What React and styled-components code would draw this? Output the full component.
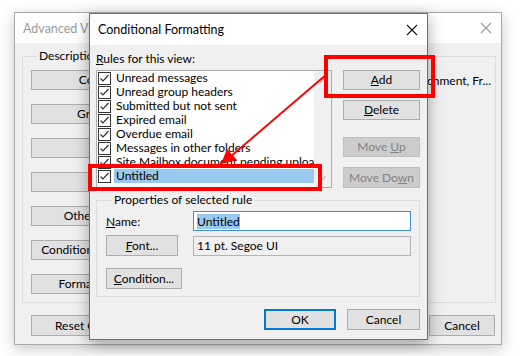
import React from 'react';
import styled, {createGlobalStyle} from 'styled-components';

const Global = createGlobalStyle`
  html, body { margin: 0; padding: 0; background: #fff; }
  body { font-family: Lato, "Noto Sans", sans-serif; font-size: 12px; color: #000; }
`;

const rules = [
  'Unread messages',
  'Unread group headers',
  'Submitted but not sent',
  'Expired email',
  'Overdue email',
  'Messages in other folders',
  'Site Mailbox document pending upload',
  'Untitled',
];

const bgButtons = [
  ['Columns...', 'Importance, Reminder, Icon, Attachment, Fr...'],
  ['Group By...', ''],
  ['Sort...', ''],
  ['Filter...', ''],
  ['Other Settings...', ''],
  ['Conditional Formatting...', ''],
  ['Format Columns...', ''],
];

function CloseIcon({color}) {
  return (
    <svg width="12" height="12" viewBox="0 0 12 12">
      <path d="M1 1 L11 11 M11 1 L1 11" stroke={color} strokeWidth="1.1" fill="none" />
    </svg>
  );
}

function Check() {
  return (
    <CheckBox width="13" height="13" viewBox="0 0 13 13">
      <rect x="0.5" y="0.5" width="12" height="12" fill="#fff" stroke="#333" />
      <path d="M2.5 6.5 L5 9 L10.5 3" stroke="#333" strokeWidth="1.2" fill="none" />
    </CheckBox>
  );
}

export default function App() {
  return (
    <Desktop>
      <Global />

      {/* background window */}
      <Window $x={14} $y={12} $w={488} $h={333}>
        <TitleBar $h={30}>
          <Title $inactive>Advanced View Settings: Compact</Title>
          <CloseIcon color="#9a9a9a" />
        </TitleBar>
        <BgBody>
          <Group $pad="1px 4px 8px 8px">
            <legend>Description</legend>
            <BgRows>
              {bgButtons.map(([label, desc]) => (
                <BgRow key={label}>
                  <Button $w={150} $h={20}>{label}</Button>
                  <BgDesc>{desc}</BgDesc>
                </BgRow>
              ))}
            </BgRows>
          </Group>
          <BgFooter>
            <Button $w={150} $h={21}>Reset Current View</Button>
            <Button $w={66} $h={21}>Cancel</Button>
          </BgFooter>
        </BgBody>
      </Window>

      {/* foreground window */}
      <Window $x={89} $y={13} $w={339} $h={327} $active>
        <TitleBar $h={31}>
          <Title>Conditional Formatting</Title>
          <CloseIcon color="#111" />
        </TitleBar>
        <Body>
          <Caption><u>R</u>ules for this view:</Caption>
          <TopRow>
            <ListBox>
              <Items>
                {rules.map((r, i) => (
                  <Item key={r}>
                    <Check />
                    <ItemText $selected={i === rules.length - 1}>{r}</ItemText>
                  </Item>
                ))}
              </Items>
              <ScrollTrack>
                <svg width="6" height="6" viewBox="0 0 6 6"><path d="M0 6 L6 0" stroke="#c4c4c4" strokeWidth="1.5" /></svg>
                <svg width="6" height="6" viewBox="0 0 6 6"><path d="M0 6 L6 0" stroke="#c4c4c4" strokeWidth="1.5" /></svg>
              </ScrollTrack>
            </ListBox>
            <SideButtons>
              <Button $w={77} $h={20}><u>A</u>dd</Button>
              <Button $w={77} $h={20}><u>D</u>elete</Button>
              <Button $w={77} $h={20} $disabled $mt={7}>Move <u>U</u>p</Button>
              <Button $w={77} $h={21} $disabled>Move Do<u>w</u>n</Button>
            </SideButtons>
          </TopRow>
          <Group $pad="4px 8px 7px 9px" $mt={5}>
            <legend>Properties of selected rule</legend>
            <PropGrid>
              <span><u>N</u>ame:</span>
              <Field $focused><Sel>Untitled</Sel></Field>
              <Button $w={72} $h={21}><u>F</u>ont...</Button>
              <Field $readonly>11 pt. Segoe UI</Field>
              <Button $w={76} $h={21} $mt={8}><u>C</u>ondition...</Button>
            </PropGrid>
          </Group>
          <Footer>
            <Button $w={72} $h={21} $default>OK</Button>
            <Button $w={73} $h={21}>Cancel</Button>
          </Footer>
        </Body>
      </Window>

      {/* annotations */}
      <Mark $x={324} $y={55} $w={111} $h={43} />
      <Mark $x={88} $y={164} $w={234} $h={27} />
      <Arrow width="527" height="356" viewBox="0 0 527 356">
        <line x1="327" y1="74" x2="230" y2="157" stroke="#ff0000" strokeWidth="2" />
        <polygon points="221,164 227,149 237,160" fill="#ff0000" />
      </Arrow>
    </Desktop>
  );
}

const Desktop = styled.div`
  position: relative;
  width: 527px;
  height: 356px;
  overflow: hidden;
  background: #fff;
`;

const Window = styled.div`
  position: absolute;
  left: ${p => p.$x}px;
  top: ${p => p.$y}px;
  width: ${p => p.$w}px;
  height: ${p => p.$h}px;
  box-sizing: border-box;
  display: flex;
  flex-direction: column;
  background: #f0f0f0;
  border: 1px solid ${p => (p.$active ? '#6f6f6f' : '#a9a9a9')};
  box-shadow: 0 4px 14px rgba(0, 0, 0, ${p => (p.$active ? 0.35 : 0.22)});
`;

const TitleBar = styled.div`
  height: ${p => p.$h}px;
  flex: none;
  background: #fff;
  display: flex;
  align-items: center;
  justify-content: space-between;
  padding: 0 9px 0 8px;
`;

const Title = styled.span`
  font-size: 12.5px;
  color: ${p => (p.$inactive ? '#9a9a9a' : '#000')};
  white-space: nowrap;
`;

const BgBody = styled.div`
  flex: 1;
  display: flex;
  flex-direction: column;
  padding: 6px 5px 8px 7px;
`;

const Group = styled.fieldset`
  margin: ${p => p.$mt || 0}px 0 0 0;
  padding: ${p => p.$pad};
  border: 1px solid #dcdcdc;
  min-width: 0;
  legend {
    padding: 0 2px;
    margin-left: 6px;
    line-height: 14px;
  }
`;

const BgRows = styled.div`
  display: flex;
  flex-direction: column;
  gap: 14px;
  padding-top: 6px;
`;

const BgRow = styled.div`
  display: flex;
  align-items: center;
  gap: 12px;
`;

const BgDesc = styled.span`
  flex: 1;
  min-width: 0;
  white-space: nowrap;
  overflow: hidden;
  text-align: right;
`;

const BgFooter = styled.div`
  margin-top: auto;
  display: flex;
  justify-content: space-between;
  padding: 0 1px 0 9px;
`;

const Button = styled.div`
  width: ${p => p.$w}px;
  height: ${p => p.$h}px;
  line-height: ${p => p.$h - 2}px;
  margin-top: ${p => p.$mt || 0}px;
  box-sizing: border-box;
  flex: none;
  text-align: center;
  white-space: nowrap;
  overflow: hidden;
  background: ${p => (p.$disabled ? '#cccccc' : '#e1e1e1')};
  color: ${p => (p.$disabled ? '#838383' : '#000')};
  border: ${p => (p.$default ? '2px solid #0078d7' : `1px solid ${p.$disabled ? '#bfbfbf' : '#adadad'}`)};
  ${p => p.$default && `line-height: ${p.$h - 4}px;`}
`;

const Body = styled.div`
  flex: 1;
  display: flex;
  flex-direction: column;
  padding: 6px 7px 9px 6px;
`;

const Caption = styled.div`
  line-height: 16px;
  height: 19px;
`;

const TopRow = styled.div`
  display: flex;
  gap: 11px;
  align-items: flex-start;
`;

const ListBox = styled.div`
  width: 236px;
  height: 118px;
  box-sizing: border-box;
  border: 1px solid #acacac;
  background: #fff;
  display: flex;
`;

const Items = styled.div`
  flex: 1;
  min-width: 0;
  overflow: hidden;
`;

const Item = styled.div`
  height: 14px;
  display: flex;
  align-items: center;
  padding-left: 1px;
  gap: 3px;
  white-space: nowrap;
`;

const CheckBox = styled.svg`
  flex: none;
`;

const ItemText = styled.span`
  flex: 1;
  line-height: 14px;
  padding-left: 2px;
  background: ${p => (p.$selected ? '#99c9ef' : 'transparent')};
`;

const ScrollTrack = styled.div`
  width: 17px;
  flex: none;
  background: #f0f0f0;
  display: flex;
  flex-direction: column;
  justify-content: space-between;
  align-items: center;
  padding: 6px 0 5px;
`;

const SideButtons = styled.div`
  display: flex;
  flex-direction: column;
  gap: 10px;
`;

const PropGrid = styled.div`
  display: grid;
  grid-template-columns: 87px 1fr;
  row-gap: 4px;
  align-items: center;
`;

const Field = styled.div`
  height: 20px;
  box-sizing: border-box;
  display: flex;
  align-items: center;
  padding-left: 3px;
  border: 1px solid ${p => (p.$focused ? '#3c8fd8' : '#b4b4b4')};
  background: ${p => (p.$readonly ? '#f0f0f0' : '#fff')};
`;

const Sel = styled.span`
  background: #99c9ef;
  line-height: 15px;
`;

const Footer = styled.div`
  margin-top: auto;
  display: flex;
  justify-content: flex-end;
  gap: 11px;
`;

const Mark = styled.div`
  position: absolute;
  left: ${p => p.$x}px;
  top: ${p => p.$y}px;
  width: ${p => p.$w}px;
  height: ${p => p.$h}px;
  box-sizing: border-box;
  border: 4px solid #ff0000;
`;

const Arrow = styled.svg`
  position: absolute;
  left: 0;
  top: 0;
  pointer-events: none;
`;
